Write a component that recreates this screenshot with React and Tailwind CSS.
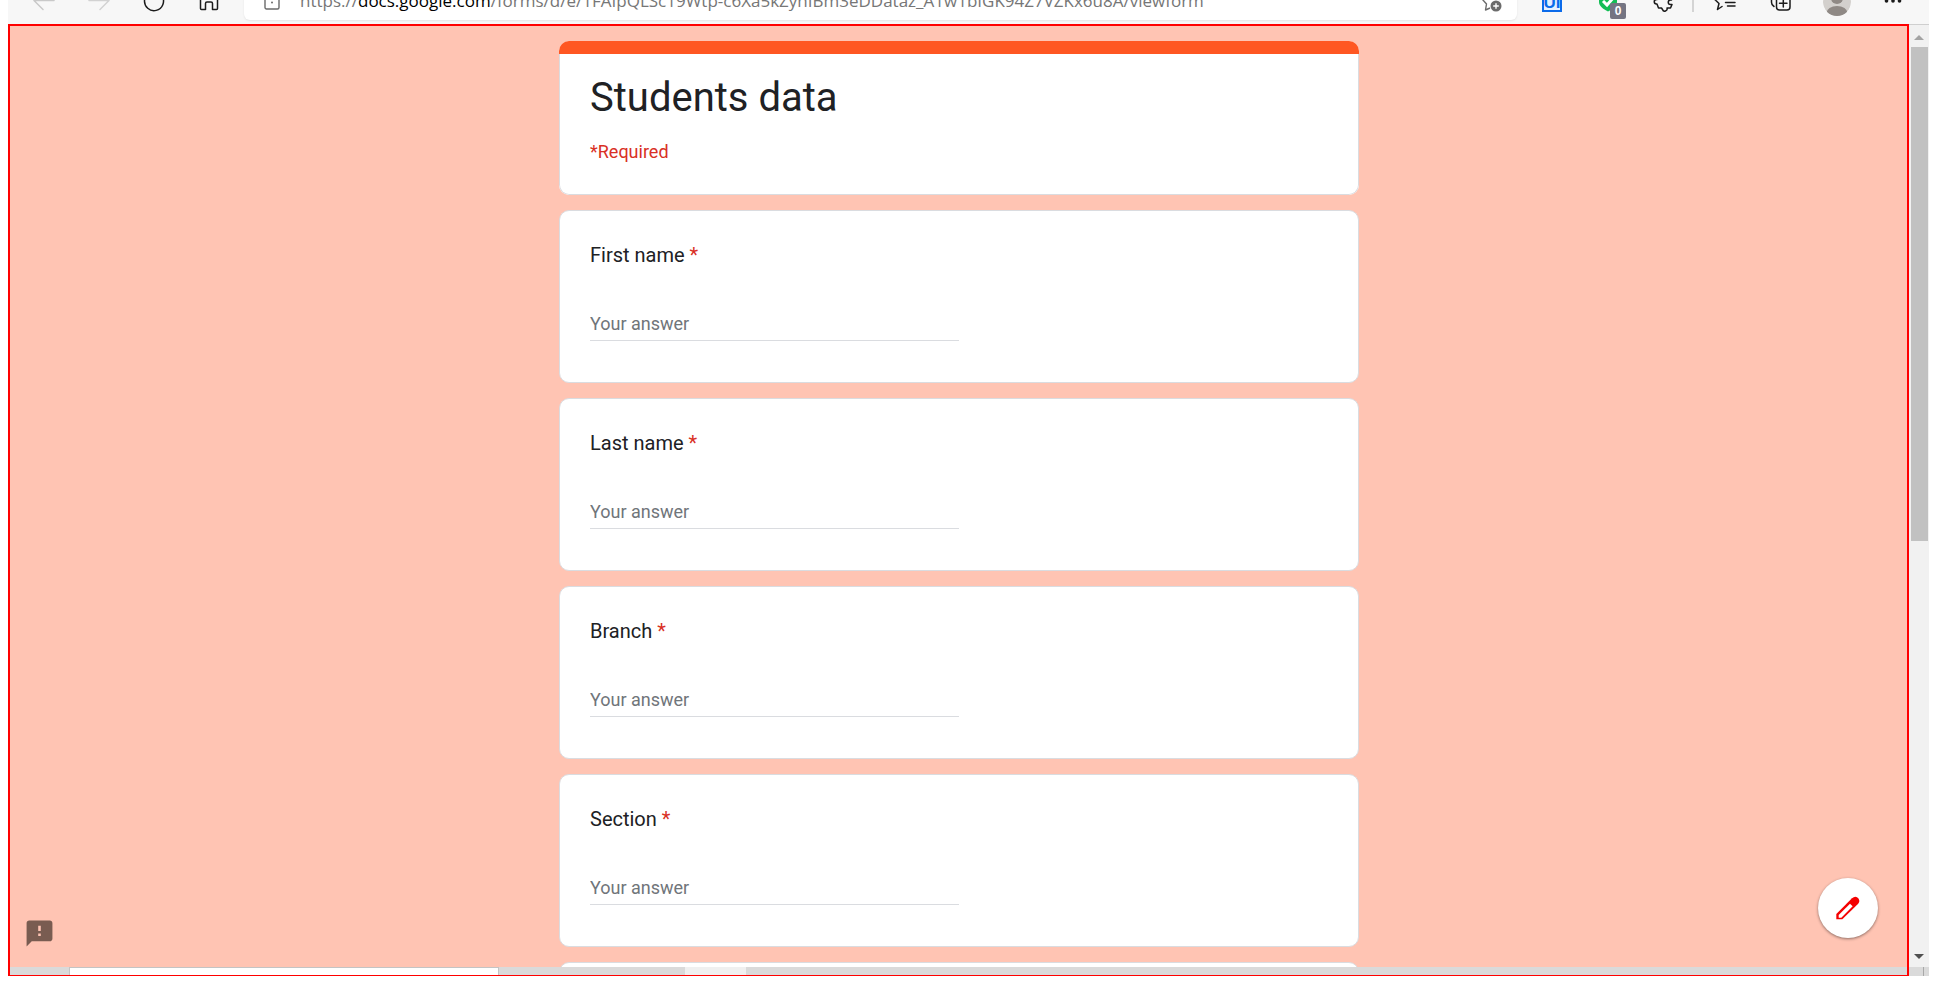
import React from "react";

const questions = [
  { id: "first-name", label: "First name" },
  { id: "last-name", label: "Last name" },
  { id: "branch", label: "Branch" },
  { id: "section", label: "Section" },
];

function ToolButton({ label, className = "", children }) {
  return (
    <button
      type="button"
      aria-label={label}
      className={`flex h-11 shrink-0 items-center justify-center text-[#1b1b1b] ${className}`}
    >
      {children}
    </button>
  );
}

function Icon({ size = 22, children, className = "" }) {
  return (
    <svg
      width={size}
      height={size}
      viewBox="0 0 22 22"
      fill="none"
      stroke="currentColor"
      strokeWidth="1.5"
      strokeLinecap="round"
      strokeLinejoin="round"
      className={className}
      aria-hidden="true"
    >
      {children}
    </svg>
  );
}

function BrowserBar() {
  return (
    <header className="mr-[9px] flex h-6 shrink-0 items-end overflow-hidden bg-[#f7f7f7]">
      <div className="flex h-11 w-full items-center px-2">
        <ToolButton label="Back" className="w-[55px]">
          <Icon className="text-[#c9c9c9]">
            <path d="M21 9.5H1M10 .5L1 9.5l9 9" />
          </Icon>
        </ToolButton>
        <ToolButton label="Forward" className="w-[55px]">
          <Icon className="text-[#d2d2d2]">
            <path d="M1 9.5h20M12 .5l9 9-9 9" />
          </Icon>
        </ToolButton>
        <ToolButton label="Refresh" className="w-[55px]">
          <Icon>
            <path d="M19 5A9.5 9.5 0 1 1 15 1.500M19 0v5h-5" />
          </Icon>
        </ToolButton>
        <ToolButton label="Home" className="w-[55px]">
          <Icon>
            <path d="M2.500 8L11 .5 19.500 8v9.500a1 1 0 0 1-1 1h-4v-6a1.500 1.500 0 0 0-1.500-1.500H9A1.500 1.500 0 0 0 7.500 12.500v6h-4a1 1 0 0 1-1-1z" />
          </Icon>
        </ToolButton>

        <div className="ml-2 mr-[7px] flex h-9 min-w-0 flex-1 items-center rounded-md bg-white pl-5 pr-[15px] shadow-[0_1px_2px_rgba(0,0,0,0.08)]">
          <svg width="16" height="20" viewBox="0 0 16 20" fill="none" stroke="#6b6b6b" strokeWidth="1.400" aria-hidden="true" className="shrink-0">
            <rect x="1" y="4" width="14" height="13" rx="1.500" />
            <path d="M5 4V3a3 3 0 0 1 6 0v1" />
            <circle cx="8" cy="10.500" r="1" fill="#6b6b6b" stroke="none" />
          </svg>
          <a
            href="#form"
            className="ml-5 min-w-0 flex-1 overflow-hidden pb-0.5 font-['Open_Sans',sans-serif] text-[17px] leading-6 whitespace-nowrap text-[#767676]"
          >
            https://<span className="text-black">docs.google.com</span>
            /forms/d/e/1FAIpQLSc19Wtp-c6Xa5kZyhIBm3eDDataz_A1w1bIGK94Z7VZKx6u8A/viewform
          </a>
          <button type="button" aria-label="Add to favorites" className="shrink-0 text-[#6b6b6b]">
            <svg width="20" height="20" viewBox="0 0 20 20" fill="none" stroke="currentColor" strokeWidth="1.400" strokeLinejoin="round" aria-hidden="true">
              <path d="M8 16l-4.500 2 1-6L.5 7.500 6.500 6.500 9 1l2.500 5.500 6 1" />
              <circle cx="14" cy="14" r="5.500" fill="currentColor" stroke="none" />
              <path d="M14 11.200v5.600M11.200 14h5.600" stroke="white" />
            </svg>
          </button>
        </div>

        <ToolButton label="UI extension" className="w-14">
          <span className="flex h-5 w-5 items-center justify-center border-2 border-[#0b6bea] bg-[#e4f0ff] font-['Liberation_Sans',sans-serif] text-[17px] leading-none font-bold text-[#0b6bea]">
            UI
          </span>
        </ToolButton>
        <ToolButton label="Protection, 0 blocked" className="w-14">
          <span className="relative">
            <svg width="20" height="22" viewBox="0 0 20 22" aria-hidden="true">
              <path d="M10 0l9 3v8c0 4-4 7-9 9.500C5 18 1 15 1 11V3z" fill="#12bd55" />
              <path d="M5 10l4 4 7-8" fill="none" stroke="white" strokeWidth="3" />
            </svg>
            <span className="absolute top-3 left-3 flex h-4 w-4 items-center justify-center rounded-xs bg-[#747482] font-['Liberation_Sans',sans-serif] text-[12px] leading-none font-bold text-white">
              0
            </span>
          </span>
        </ToolButton>
        <ToolButton label="Extensions" className="w-14">
          <Icon>
            <path d="M8 3.500a2.500 2.500 0 0 1 5 0V4h4a1.500 1.500 0 0 1 1.500 1.500V9h-1a2 2 0 0 0 0 4.500h1.500l-1.500 3.500h-3.500a2.300 2.300 0 0 1-4.500 1.500L8.500 17H5.500L4 13H3.500a2.200 2.200 0 0 1 0-4.500H4v-3A1.500 1.500 0 0 1 5.500 4H8z" />
          </Icon>
        </ToolButton>
        <span className="mr-[3px] h-5 w-0.5 shrink-0 bg-[#d4d4d4]" />
        <ToolButton label="Favorites" className="w-14">
          <Icon>
            <path d="M8 15.500L3.500 18.500 5 12.500.8 8.500 7 8l3-6 3 6M11.500 11.500H21M13.500 15H21M13 8h8" />
          </Icon>
        </ToolButton>
        <ToolButton label="Collections" className="w-14">
          <Icon>
            <path d="M4 15.500A5 5 0 0 1 1.500 11V4.500a3 3 0 0 1 3-3H11a4 4 0 0 1 3.500 2" />
            <rect x="6.500" y="5.500" width="13.500" height="13.500" rx="3" />
            <path d="M13.300 8.500v7.500M9.500 12.300H17" />
          </Icon>
        </ToolButton>
        <ToolButton label="Profile" className="w-14">
          <svg width="28" height="28" viewBox="0 0 28 28" aria-hidden="true" className="rounded-full">
            <circle cx="14" cy="14" r="14" fill="#d3d0cd" />
            <circle cx="14" cy="10" r="6" fill="#8f8985" />
            <ellipse cx="14" cy="25" rx="10.500" ry="7" fill="#8f8985" />
          </svg>
        </ToolButton>
        <ToolButton label="Settings and more" className="w-14">
          <svg width="18" height="6" viewBox="0 0 18 6" fill="currentColor" aria-hidden="true">
            <circle cx="2.500" cy="2" r="1.800" />
            <circle cx="9" cy="2" r="1.800" />
            <circle cx="15.500" cy="2" r="1.800" />
          </svg>
        </ToolButton>
      </div>
    </header>
  );
}

function Question({ id, label }) {
  return (
    <div className="rounded-[10px] border border-[#dadce0] bg-white px-[30px] pt-8 pb-[41px]">
      <label htmlFor={id} className="block text-[20px] leading-6 text-[#202124]">
        {label} <span className="text-[#d93025]">*</span>
      </label>
      <input
        id={id}
        type="text"
        required
        placeholder="Your answer"
        className="mt-[45px] block w-1/2 border-b border-[#dadce0] pb-1 text-[18px] leading-6 outline-none placeholder:text-[#70757a]"
      />
    </div>
  );
}

function Scrollbar() {
  return (
    <div className="flex w-5 shrink-0 flex-col">
      <div className="flex flex-1 flex-col items-center border-t border-[#cfcfcf] bg-[#f1f1f1]">
        <svg width="10" height="5" viewBox="0 0 10 5" className="mt-2.5" aria-hidden="true">
          <path d="M5 0l5 5H0z" fill="#a3a3a3" />
        </svg>
        <div className="mt-[7px] w-[17px] flex-[494] bg-[#c1c1c1]" />
        <div className="flex-[413]" />
        <svg width="10" height="5" viewBox="0 0 10 5" className="mb-2" aria-hidden="true">
          <path d="M0 0h10L5 5z" fill="#505050" />
        </svg>
      </div>
      <div className="flex h-[9px] justify-end bg-[#dadada] pr-[5px]">
        <span className="w-px bg-[#a8a8a8]" />
      </div>
    </div>
  );
}

export default function App() {
  return (
    <div className="flex h-screen flex-col bg-white pb-[25px] pl-2 font-['Roboto',sans-serif]">
      <BrowserBar />
      <div className="mr-[9px] flex min-h-0 flex-1">
        <div className="flex min-w-0 flex-1 flex-col border-2 border-b border-[#ff0000]">
          <main id="form" className="relative min-h-0 flex-1 overflow-hidden bg-[#ffc4b3] pt-[15px] pl-px">
            <form className="mx-auto flex w-[800px] max-w-full flex-col gap-[15px]">
              <div className="overflow-hidden rounded-[10px] bg-white">
                <div className="h-[13px] bg-[#ff5722]" />
                <div className="rounded-b-[10px] border border-t-0 border-[#dadce0] px-[30px] pt-[19px] pb-[30px]">
                  <h1 className="text-[40px] leading-[50px] text-[#202124]">Students data</h1>
                  <p className="mt-[17px] text-[18px] leading-6 text-[#d93025]">*Required</p>
                </div>
              </div>
              {questions.map((q) => (
                <Question key={q.id} id={q.id} label={q.label} />
              ))}
              <div className="h-20 rounded-[10px] border border-[#dadce0] bg-white" />
            </form>

            <button type="button" aria-label="Report a problem" className="absolute bottom-[18px] left-[14px] text-[#795c51]">
              <svg width="31" height="31" viewBox="0 0 24 24" fill="currentColor" aria-hidden="true">
                <path d="M20 2H4c-1.100 0-1.990.9-1.990 2L2 22l4-4h14c1.100 0 2-.9 2-2V4c0-1.100-.9-2-2-2zm-7 12h-2v-2h2v2zm0-4h-2V6h2v4z" />
              </svg>
            </button>
            <button
              type="button"
              aria-label="Edit this form"
              className="absolute right-[29px] bottom-[29px] flex h-[60px] w-[60px] items-center justify-center rounded-full bg-white shadow-[0_1px_3px_rgba(0,0,0,0.45)]"
            >
              <svg width="26" height="26" viewBox="165 135 78 78" aria-hidden="true">
                <path d="M169 208V192L216 145Q227 135 236 146Q241 155 233 163L187 208Z" fill="#f40000" />
                <path d="M176 195L210 161L218 169L184 203L176 203Z" fill="white" />
              </svg>
            </button>
          </main>
          <div className="flex h-2 shrink-0 bg-[#dadada]">
            <span className="ml-[59px] w-[430px] border border-b-0 border-[#c4c4c4] bg-white" />
            <span className="ml-[186px] w-[61px] bg-[#f0f0f0]" />
          </div>
        </div>
        <Scrollbar />
      </div>
    </div>
  );
}
